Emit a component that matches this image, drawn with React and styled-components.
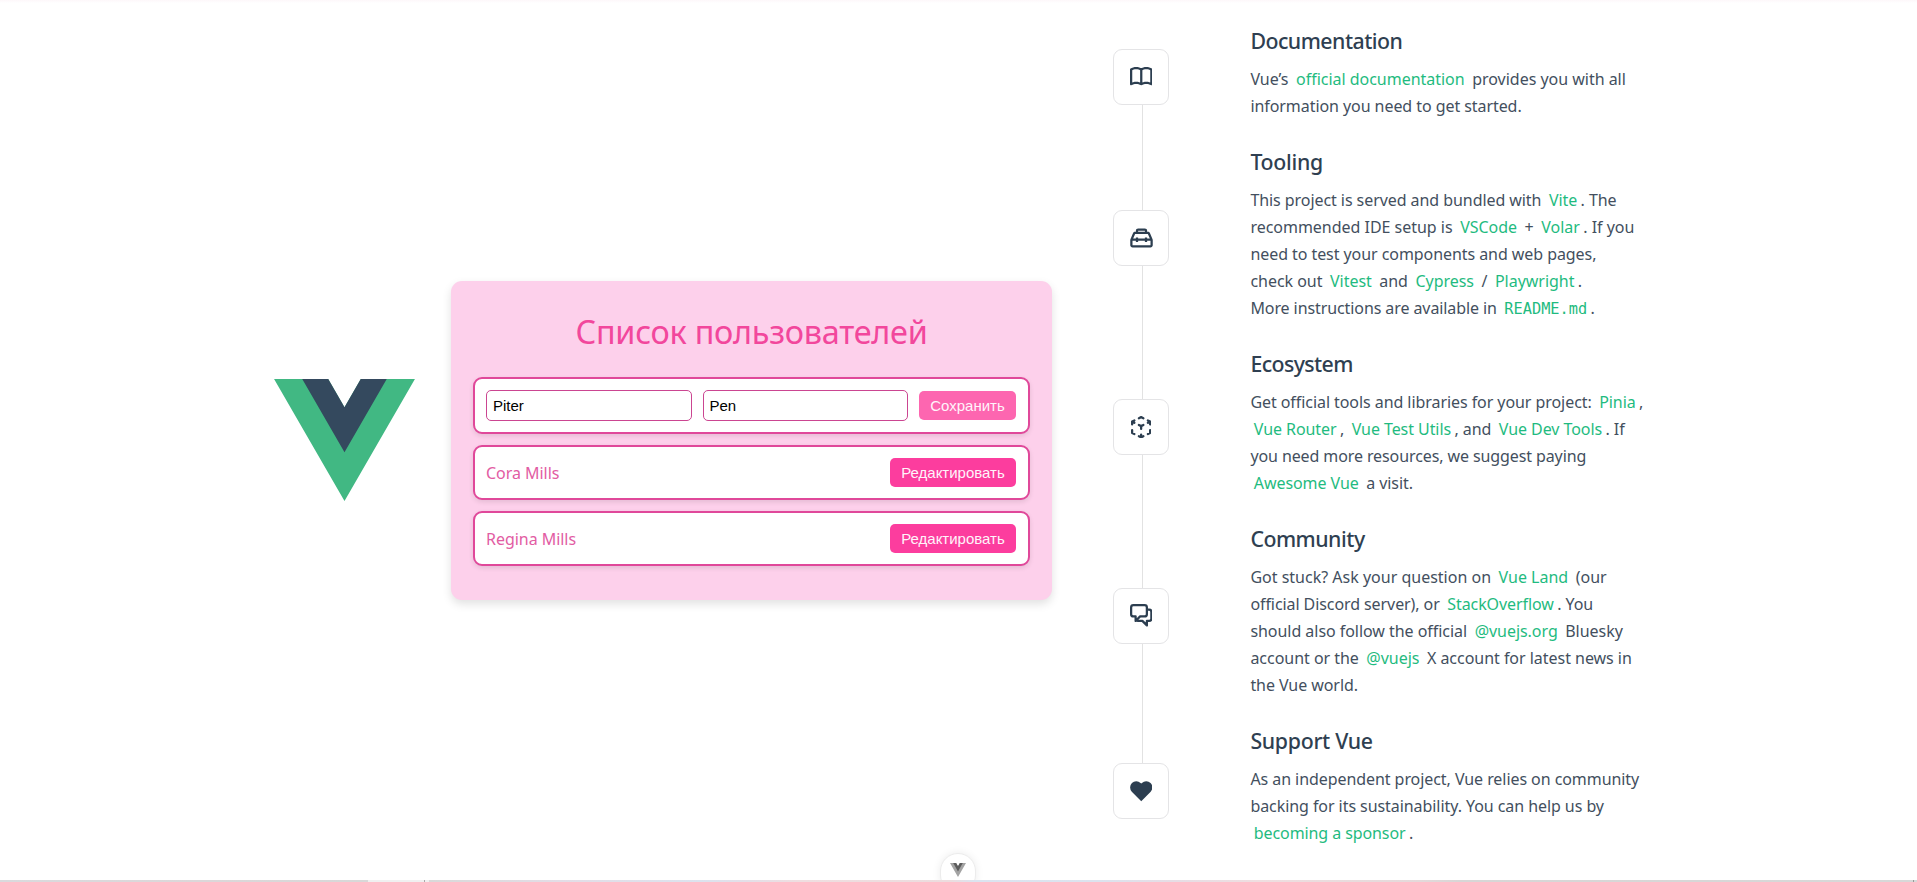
import React from 'react';
import styled, { createGlobalStyle } from 'styled-components';

const GlobalStyle = createGlobalStyle`
  *, *::before, *::after { box-sizing: border-box; }
  html, body { margin: 0; padding: 0; overflow: hidden; background: #fff; }
  body { font-family: "Noto Sans", sans-serif; font-size: 16px; color: #434f5e; }
`;

const Page = styled.main`
  position: relative;
  display: flex;
  width: 1917px;
  height: 882px;
  padding-left: 274px;
  overflow: hidden;
  background: linear-gradient(to bottom, #fdf7fa, #fff 3px);
`;

const Header = styled.header`
  display: flex;
  align-items: center;
  gap: 36px;
  height: 881px;
  margin-right: 61px;
`;

const Logo = styled.svg`
  display: block;
  width: 141px;
  height: 122px;
  margin-bottom: 2px;
`;

const Card = styled.section`
  width: 601px;
  height: 319px;
  padding: 26px 22px 0;
  border-radius: 11px;
  background: #fdd0eb;
  box-shadow: 0 4px 10px rgba(0, 0, 0, 0.12);
`;

const Title = styled.h1`
  margin: 0 0 22px;
  height: 48px;
  line-height: 48px;
  font-size: 32.4px;
  font-weight: 400;
  letter-spacing: -0.25px;
  text-align: center;
  color: #f2479c;
`;

const UserList = styled.ul`
  display: flex;
  flex-direction: column;
  gap: 11px;
  margin: 0;
  padding: 0;
  list-style: none;
`;

const UserRow = styled.li`
  display: flex;
  align-items: center;
  justify-content: space-between;
  gap: 11px;
  height: ${(p) => (p.$editing ? 57 : 55)}px;
  padding: 0 12px 0 11px;
  border: 2px solid #e0489a;
  border-radius: 9px;
  background: #fff;
  box-shadow: 0 2px 5px rgba(0, 0, 0, 0.1);
`;

const UserName = styled.span`
  color: #e25ca3;
  letter-spacing: -0.04px;
`;

const Field = styled.input`
  flex: 1;
  min-width: 0;
  height: 31px;
  padding: 0 6px;
  border: 1px solid #cb4591;
  border-radius: 5px;
  outline: none;
  background: #fff;
  font: 15px "Liberation Sans", sans-serif;
  color: #000;
`;

const Button = styled.button`
  width: ${(p) => (p.$soft ? 97 : 126)}px;
  height: 29px;
  padding: 0;
  border: 0;
  border-radius: 5px;
  background: ${(p) => (p.$soft ? '#fd66b0' : '#fc3d9e')};
  font: 15px "Liberation Sans", sans-serif;
  color: #fff4fa;
`;

const Topics = styled.div`
  padding-top: 16px;
`;

const Topic = styled.article`
  display: flex;
  gap: 81.4px;
  height: ${(p) => p.$lines * 27 + 67.2}px;
`;

const Rail = styled.div`
  display: flex;
  flex-direction: column;
  align-items: center;
  width: 56px;
`;

const RailLine = styled.span`
  flex: 1;
  width: 1px;
  margin-left: 2px;
  background: ${(p) => (p.$hidden ? 'transparent' : '#e2e2e2')};
`;

const IconBox = styled.div`
  display: flex;
  align-items: center;
  justify-content: center;
  width: 56px;
  height: 56px;
  border: 1px solid #e4e4e6;
  border-radius: 9px;
  color: #2c3e50;
  svg { display: block; fill: currentColor; }
`;

const TopicText = styled.div`
  padding-top: 9.5px;
  white-space: nowrap;
`;

const TopicTitle = styled.h3`
  margin: 0 0 10px;
  height: 30px;
  line-height: 30px;
  font-size: 21.3px;
  font-weight: 500;
  letter-spacing: ${(p) => p.$tracking || 0}px;
  color: #2f3f51;
`;

const Line = styled.div`
  height: 27px;
  line-height: 27px;
  letter-spacing: ${(p) => p.$tracking ?? -0.065}px;
`;

const Link = styled.a`
  padding: 0 3.4px;
  color: #1fbb80;
`;

const Code = styled.code`
  font-family: "DejaVu Sans Mono", monospace;
  font-size: 15.3px;
  letter-spacing: 0;
`;

const Badge = styled.div`
  position: absolute;
  left: 940px;
  top: 853px;
  display: flex;
  justify-content: center;
  width: 36px;
  height: 40px;
  padding-top: 9px;
  border: 1px solid #ececec;
  border-radius: 18px;
  background: #fff;
  box-shadow: 0 0 8px rgba(0, 0, 0, 0.08);
  svg { width: 16px; height: 14px; }
`;

const BottomEdge = styled.div`
  position: absolute;
  left: 0;
  right: 0;
  bottom: 0;
  height: 2px;
  background: linear-gradient(
    to right,
    #dadadd 0, #dcd7d9 200px, #d8d8d8 368px,
    #f0f0f0 368px, #f0f0f0 424px, #aaa 424px, #aaa 425px, #f0f0f0 425px, #f0f0f0 429px,
    #d9d9d9 429px, #e3dde6 560px, #dce3ee 700px, #e3dfe8 745px, #efdee0 800px, #ecdcde 950px,
    #dbe4f0 975px, #dce3ee 1100px, #e6dde5 1170px, #efdee0 1260px, #e4d9da 1420px,
    #d8d6d6 1460px, #d8d8d8 1913px, #999 1913px, #999 1914px, #d8d8d8 1914px
  );
`;

function VueMark({ outer, inner, as: Tag = 'svg' }) {
  return (
    <Tag viewBox="0 0 261.76 226.69">
      <path d="M161.096.001l-30.225 52.351L100.647.001H-.005l130.877 226.688L261.749.001z" fill={outer} />
      <path d="M161.096.001l-30.225 52.351L100.647.001H52.346l78.526 136.01L209.398.001z" fill={inner} />
    </Tag>
  );
}

const icons = {
  book: {
    w: 20, h: 17,
    d: 'M11 2.253a1 1 0 1 0-2 0h2zm-2 13a1 1 0 1 0 2 0H9zm.447-12.167a1 1 0 1 0 1.107-1.666L9.447 3.086zM1 2.253L.447 1.42A1 1 0 0 0 0 2.253h1zm0 13H0a1 1 0 0 0 1.553.833L1 15.253zm8.447.833a1 1 0 1 0 1.107-1.666l-1.107 1.666zm0-14.666a1 1 0 1 0 1.107 1.666L9.447 1.42zM19 2.253h1a1 1 0 0 0-.447-.833L19 2.253zm0 13l-.553.833A1 1 0 0 0 20 15.253h-1zm-9.553-.833a1 1 0 1 0 1.107 1.666L9.447 14.42zM9 2.253v13h2v-13H9zm1.553-.833C9.203.523 7.42 0 5.5 0v2c1.572 0 2.961.431 3.947 1.086l1.107-1.666zM5.5 0C3.58 0 1.797.523.447 1.42l1.107 1.666C2.539 2.431 3.928 2 5.5 2V0zM0 2.253v13h2v-13H0zm1.553 13.833C2.539 15.431 3.928 15 5.5 15v-2c-1.92 0-3.703.523-5.053 1.42l1.107 1.666zM5.5 15c1.572 0 2.961.431 3.947 1.086l1.107-1.666C9.203 13.523 7.42 13 5.5 13v2zm5.053-11.914C11.539 2.431 12.928 2 14.5 2V0c-1.92 0-3.703.523-5.053 1.42l1.107 1.666zM14.5 2c1.573 0 2.961.431 3.947 1.086l1.107-1.666C18.203.523 16.421 0 14.5 0v2zm3.5.253v13h2v-13h-2zm1.553 12.167C18.203 13.523 16.421 13 14.5 13v2c1.573 0 2.961.431 3.947 1.086l1.107-1.666zM14.5 13c-1.92 0-3.703.523-5.053 1.42l1.107 1.666C11.539 15.431 12.928 15 14.5 15v-2z',
  },
  toolbox: {
    w: 24, h: 24,
    d: 'M20 18v-4h-3v1h-2v-1H9v1H7v-1H4v4h16M6.33 8l-1.74 4H7v-1h2v1h6v-1h2v1h2.41l-1.74-4H6.33M9 5v1h6V5H9m12.84 7.61c.1.22.16.48.16.8V18c0 .53-.21 1-.6 1.41-.4.4-.85.59-1.4.59H4c-.55 0-1-.19-1.4-.59C2.21 19 2 18.53 2 18v-4.59c0-.32.06-.58.16-.8L4.5 7.22C4.84 6.41 5.45 6 6.33 6H7V5c0-.55.18-1 .57-1.41C7.96 3.2 8.44 3 9 3h6c.56 0 1.04.2 1.43.59.39.41.57.86.57 1.41v1h.67c.88 0 1.49.41 1.83 1.22l2.34 5.39z',
  },
  cube: {
    w: 18, h: 20,
    d: 'M11.447 8.894a1 1 0 1 0-.894-1.789l.894 1.789zm-2.894-.789a1 1 0 1 0 .894 1.789l-.894-1.789zm0 1.789a1 1 0 1 0 .894-1.789l-.894 1.789zM7.447 7.106a1 1 0 1 0-.894 1.789l.894-1.789zM10 9a1 1 0 1 0-2 0h2zm-2 2.5a1 1 0 1 0 2 0H8zm9.447-5.606a1 1 0 1 0-.894-1.789l.894 1.789zm-2.894-.789a1 1 0 1 0 .894 1.789l-.894-1.789zm2 .789a1 1 0 1 0 .894-1.789l-.894 1.789zm-1.106-2.789a1 1 0 1 0-.894 1.789l.894-1.789zM18 5a1 1 0 1 0-2 0h2zm-2 2.5a1 1 0 1 0 2 0h-2zm-5.447-4.606a1 1 0 1 0 .894-1.789l-.894 1.789zM9 1l.447-.894a1 1 0 0 0-.894 0L9 1zm-2.447.106a1 1 0 1 0 .894 1.789l-.894-1.789zm-6 3a1 1 0 1 0 .894 1.789L.553 4.106zm2.894.789a1 1 0 1 0-.894-1.789l.894 1.789zm-2-.789a1 1 0 1 0-.894 1.789l.894-1.789zm1.106 2.789a1 1 0 1 0 .894-1.789l-.894 1.789zM2 5a1 1 0 1 0-2 0h2zM0 7.5a1 1 0 1 0 2 0H0zm8.553 12.394a1 1 0 1 0 .894-1.789l-.894 1.789zm-1.106-2.789a1 1 0 1 0-.894 1.789l.894-1.789zm1.106 1a1 1 0 1 0 .894 1.789l-.894-1.789zm2.894.789a1 1 0 1 0-.894-1.789l.894 1.789zM8 19a1 1 0 1 0 2 0H8zm2-2.5a1 1 0 1 0-2 0h2zm-7.447.394a1 1 0 1 0 .894-1.789l-.894 1.789zM1 15H0a1 1 0 0 0 .553.894L1 15zm1-2.5a1 1 0 1 0-2 0h2zm12.553 2.606a1 1 0 1 0 .894 1.789l-.894-1.789zM17 15l.447.894A1 1 0 0 0 18 15h-1zm1-2.5a1 1 0 1 0-2 0h2zm-7.447-5.394l-2 1 .894 1.789 2-1-.894-1.789zm-1.106 1l-2-1-.894 1.789 2 1 .894-1.789zM8 9v2.5h2V9H8zm8.553-4.894l-2 1 .894 1.789 2-1-.894-1.789zm.894 0l-2-1-.894 1.789 2 1 .894-1.789zM16 5v2.5h2V5h-2zm-4.553-3.894l-2-1-.894 1.789 2 1 .894-1.789zm-2.894-1l-2 1 .894 1.789 2-1L8.553.106zM1.447 5.894l2-1-.894-1.789-2 1 .894 1.789zm-.894 0l2 1 .894-1.789-2-1-.894 1.789zM0 5v2.5h2V5H0zm9.447 13.106l-2-1-.894 1.789 2 1 .894-1.789zm0 1.789l2-1-.894-1.789-2 1 .894 1.789zM10 19v-2.5H8V19h2zm-6.553-3.894l-2-1-.894 1.789 2 1 .894-1.789zM2 15v-2.5H0V15h2zm13.447 1.894l2-1-.894-1.789-2 1 .894 1.789zM18 15v-2.5h-2V15h2z',
  },
  chat: {
    w: 20, h: 20,
    d: 'M15 4a1 1 0 1 0 0 2V4zm0 11v-1a1 1 0 0 0-1 1h1zm0 4l-.707.707A1 1 0 0 0 16 19h-1zm-4-4l.707-.707A1 1 0 0 0 11 14v1zm-4.707-1.293a1 1 0 0 0-1.414 1.414l1.414-1.414zm-.707.707l-.707-.707.707.707zM9 11v-1a1 1 0 0 0-.707.293L9 11zm-4 0h1a1 1 0 0 0-1-1v1zm0 4H4a1 1 0 0 0 1.707.707L5 15zm10-9h2V4h-2v2zm2 0a1 1 0 0 1 1 1h2a3 3 0 0 0-3-3v2zm1 1v6h2V7h-2zm0 6a1 1 0 0 1-1 1v2a3 3 0 0 0 3-3h-2zm-1 1h-2v2h2v-2zm-3 1v4h2v-4h-2zm1.707 3.293l-4-4-1.414 1.414 4 4 1.414-1.414zM11 14H7v2h4v-2zm-4 0c-.276 0-.525-.111-.707-.293l-1.414 1.414C5.42 15.663 6.172 16 7 16v-2zm-.707 1.121l3.414-3.414-1.414-1.414-3.414 3.414 1.414 1.414zM9 12h4v-2H9v2zm4 0a3 3 0 0 0 3-3h-2a1 1 0 0 1-1 1v2zm3-3V3h-2v6h2zm0-6a3 3 0 0 0-3-3v2a1 1 0 0 1 1 1h2zm-3-3H3v2h10V0zM3 0a3 3 0 0 0-3 3h2a1 1 0 0 1 1-1V0zM0 3v6h2V3H0zm0 6a3 3 0 0 0 3 3v-2a1 1 0 0 1-1-1H0zm3 3h2v-2H3v2zm1-1v4h2v-4H4zm1.707 4.707l.586-.586-1.414-1.414-.586.586 1.414 1.414z',
  },
  heart: {
    w: 20, h: 20,
    d: 'M10 3.22l-.61-.6a5.5 5.5 0 0 0-7.666.105 5.5 5.5 0 0 0-.114 7.665L10 18.78l8.39-8.4a5.5 5.5 0 0 0-.114-7.665 5.5 5.5 0 0 0-7.666-.105l-.61.61z',
  },
};

function Icon({ name }) {
  const { w, h, d } = icons[name];
  return (
    <svg width={w * 1.125} height={h * 1.125} viewBox={`0 0 ${w} ${h}`}>
      <path d={d} />
    </svg>
  );
}

const topics = [
  {
    icon: 'book', title: 'Documentation', tracking: -0.52,
    lines: [
      { t: <>Vue’s <Link>official documentation</Link> provides you with all</>, s: -0.02 },
      { t: 'information you need to get started.' },
    ],
  },
  {
    icon: 'toolbox', title: 'Tooling', tracking: -0.3,
    lines: [
      { t: <>This project is served and bundled with <Link>Vite</Link>. The</> },
      { t: <>recommended IDE setup is <Link>VSCode</Link> + <Link>Volar</Link>. If you</>, s: -0.02 },
      { t: 'need to test your components and web pages,' },
      { t: <>check out <Link>Vitest</Link> and <Link>Cypress</Link> / <Link>Playwright</Link>.</>, s: -0.03 },
      { t: <>More instructions are available in <Link><Code>README.md</Code></Link>.</>, s: -0.09 },
    ],
  },
  {
    icon: 'cube', title: 'Ecosystem', tracking: -0.6,
    lines: [
      { t: <>Get official tools and libraries for your project: <Link>Pinia</Link>,</> },
      { t: <><Link>Vue Router</Link>, <Link>Vue Test Utils</Link>, and <Link>Vue Dev Tools</Link>. If</> },
      { t: 'you need more resources, we suggest paying', s: -0.1 },
      { t: <><Link>Awesome Vue</Link> a visit.</> },
    ],
  },
  {
    icon: 'chat', title: 'Community', tracking: -0.5,
    lines: [
      { t: <>Got stuck? Ask your question on <Link>Vue Land</Link> (our</>, s: 0 },
      { t: <>official Discord server), or <Link>StackOverflow</Link>. You</>, s: -0.08 },
      { t: <>should also follow the official <Link>@vuejs.org</Link> Bluesky</>, s: -0.04 },
      { t: <>account or the <Link>@vuejs</Link> X account for latest news in</>, s: -0.03 },
      { t: 'the Vue world.' },
    ],
  },
  {
    icon: 'heart', title: 'Support Vue', tracking: -0.3,
    lines: [
      { t: 'As an independent project, Vue relies on community' },
      { t: 'backing for its sustainability. You can help us by' },
      { t: <><Link>becoming a sponsor</Link>.</>, s: -0.09 },
    ],
  },
];

export default function App() {
  return (
    <>
      <GlobalStyle />
      <Page>
        <Header>
          <VueMark as={Logo} outer="#41b883" inner="#34495e" />
          <Card>
            <Title>Список пользователей</Title>
            <UserList>
              <UserRow $editing>
                <Field defaultValue="Piter" />
                <Field defaultValue="Pen" />
                <Button $soft>Сохранить</Button>
              </UserRow>
              <UserRow>
                <UserName>Cora Mills</UserName>
                <Button>Редактировать</Button>
              </UserRow>
              <UserRow>
                <UserName>Regina Mills</UserName>
                <Button>Редактировать</Button>
              </UserRow>
            </UserList>
          </Card>
        </Header>
        <Topics>
          {topics.map((topic, i) => (
            <Topic key={topic.title} $lines={topic.lines.length}>
              <Rail>
                <RailLine $hidden={i === 0} />
                <IconBox><Icon name={topic.icon} /></IconBox>
                <RailLine $hidden={i === topics.length - 1} />
              </Rail>
              <TopicText>
                <TopicTitle $tracking={topic.tracking}>{topic.title}</TopicTitle>
                {topic.lines.map((line, n) => (
                  <Line key={n} $tracking={line.s}>{line.t}</Line>
                ))}
              </TopicText>
            </Topic>
          ))}
        </Topics>
        <Badge><VueMark outer="#a3a3a3" inner="#5c5c5c" /></Badge>
        <BottomEdge />
      </Page>
    </>
  );
}
